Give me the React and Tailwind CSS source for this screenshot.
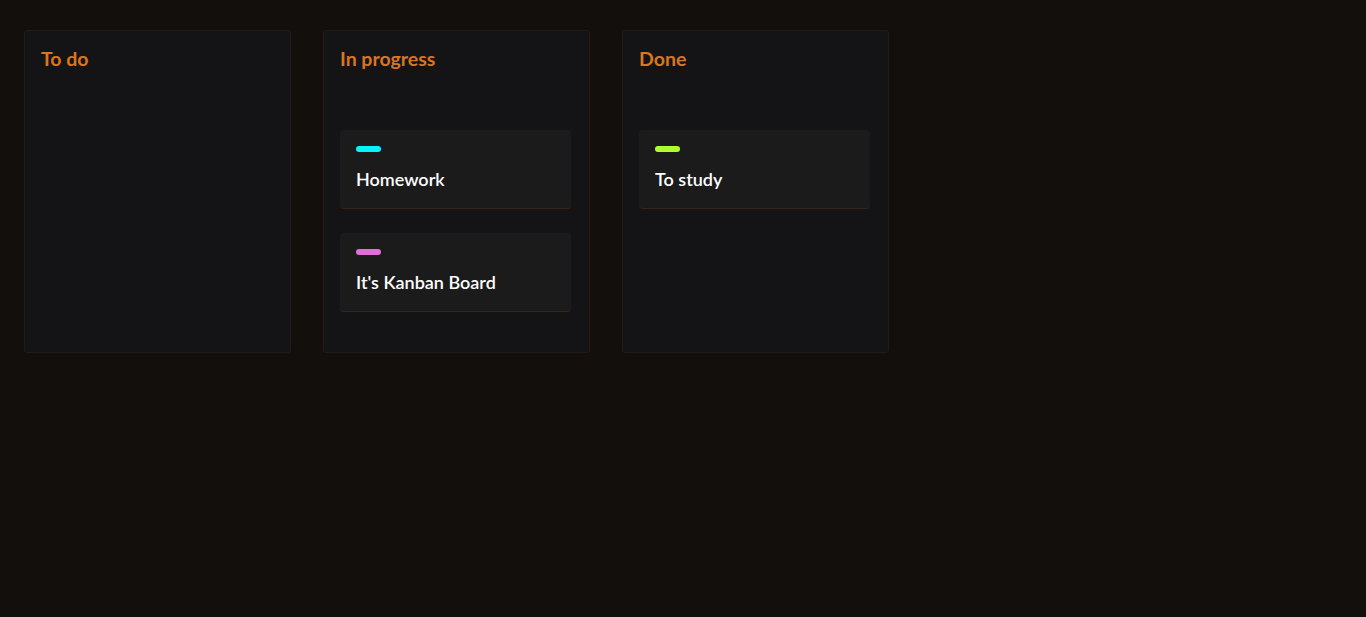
import React from "react";

const columns = [
  { title: "To do", cards: [] },
  {
    title: "In progress",
    cards: [
      { text: "Homework", color: "bg-[#00f5ff]" },
      { text: "It's Kanban Board", color: "bg-[#e070d8]" },
    ],
  },
  { title: "Done", cards: [{ text: "To study", color: "bg-[#adff2f]" }] },
];

function Card({ card }) {
  return (
    <div className="mb-6 rounded-[4px] border-b border-[#3a2614] bg-[#1b1b1b] px-4 pt-4 pb-[17px]">
      <div className={`mb-[15px] h-[6px] w-[25px] rounded-full ${card.color}`} />
      <p className="text-[18px] leading-6 font-semibold text-white">{card.text}</p>
    </div>
  );
}

export default function App() {
  return (
    <div
      className="min-h-screen bg-[#120f0c] px-6 pt-[30px]"
      style={{ fontFamily: "'Lato', 'Noto Sans', sans-serif" }}
    >
      <div className="flex items-stretch gap-8">
        {columns.map((col) => (
          <div
            key={col.title}
            className="w-[267px] rounded-[3px] border border-[#221b16] bg-[#141417] pt-4 pb-4 pl-4 pr-[18px]"
          >
            <h2 className="text-[19.5px] leading-6 font-bold text-[#d9761e]">{col.title}</h2>
            <div className="mt-[59px]">
              {col.cards.map((card) => (
                <Card key={card.text} card={card} />
              ))}
            </div>
          </div>
        ))}
      </div>
    </div>
  );
}
